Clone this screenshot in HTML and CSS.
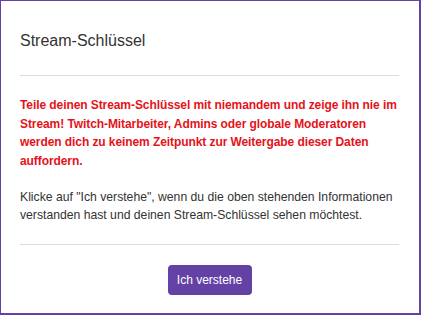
FILE: index.html
```html
<!DOCTYPE html>
<html lang="de">
<head>
<meta charset="utf-8">
<link rel="stylesheet" href="styles.css">
</head>
<body>
<div class="modal">
  <h4 class="title">Stream-Schlüssel</h4>
  <hr class="rule rule-top">
  <p class="warning">Teile deinen Stream-Schlüssel mit niemandem und zeige ihn nie im Stream! Twitch-Mitarbeiter, Admins oder globale Moderatoren werden dich zu keinem Zeitpunkt zur Weitergabe dieser Daten auffordern.</p>
  <p class="info">Klicke auf "Ich verstehe", wenn du die oben stehenden Informationen verstanden hast und deinen Stream-Schlüssel sehen möchtest.</p>
  <hr class="rule rule-bottom">
  <div class="actions">
    <button class="btn">Ich verstehe</button>
  </div>
</div>
</body>
</html>
```
FILE: styles.css
```css
html, body {
  margin: 0;
  padding: 0;
  background: #fff;
}
.modal {
  box-sizing: border-box;
  width: 421px;
  height: 315px;
  border-style: solid;
  border-color: #6441a5;
  border-width: 1px 2px 2px 1px;
  padding: 30px 20px 0 19px;
  font-family: "Liberation Sans", Arial, sans-serif;
  color: #333;
}
.title {
  margin: 0;
  font-size: 16px;
  line-height: 20px;
  font-weight: normal;
  color: #333;
}
.rule {
  border: 0;
  height: 1px;
  background: #ddd;
  margin: 0;
}
.rule-top {
  margin-top: 24px;
}
.warning {
  margin: 20px 0 0;
  font-size: 12px;
  line-height: 18.5px;
  font-weight: bold;
  letter-spacing: -0.08px;
  color: #e5121a;
}
.info {
  margin: 18px 0 0;
  font-size: 12.2px;
  line-height: 18px;
  color: #333;
}
.rule-bottom {
  margin-top: 20px;
}
.actions {
  display: flex;
  justify-content: center;
  margin-top: 20px;
}
.btn {
  height: 30px;
  width: 84px;
  padding: 0;
  border: 0;
  border-radius: 4px;
  background: #6441a5;
  color: #fff;
  font-family: "Liberation Sans", Arial, sans-serif;
  font-size: 12px;
  line-height: 30px;
}
```
